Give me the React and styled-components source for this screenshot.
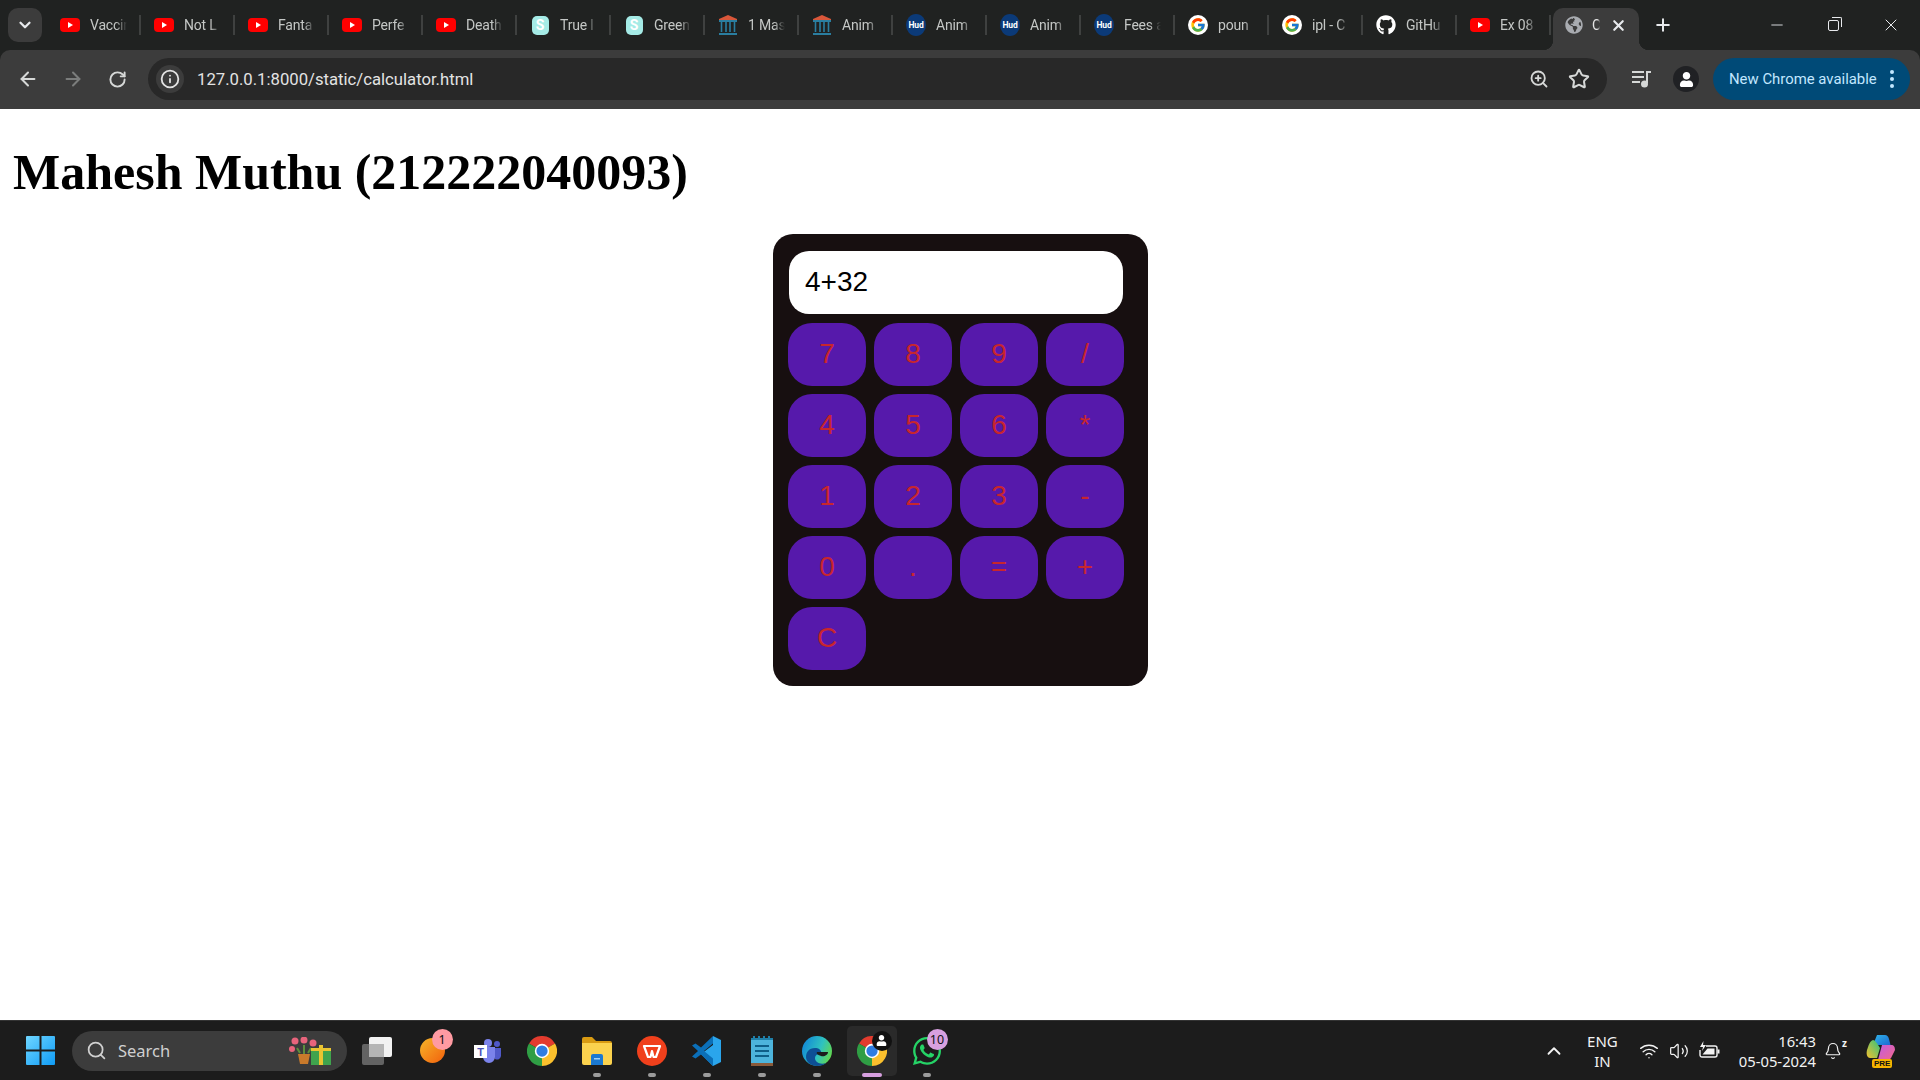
import * as React from "react";
import styled, { createGlobalStyle } from "styled-components";
import { ArrowLeft, ArrowRight, RotateCw, Info, ZoomIn, Star, ChevronDown, ChevronUp, X, Plus, Minus, Search, Wifi, Volume2, Bell } from "lucide-react";
import { FaGithub, FaWhatsapp, FaGlobeAmericas, FaUser } from "react-icons/fa";
import { FcGoogle } from "react-icons/fc";

const GlobalStyle = createGlobalStyle`
  html, body { margin: 0; padding: 0; }
  body { font-family: "Roboto", "Liberation Sans", sans-serif; background: #fff; }
`;

const Shell = styled.div`
  background: #202221;
  display: flex;
  flex-direction: column;
  height: 100vh;
  overflow: hidden;
`;

/* ---- tab strip ---- */
const TabStrip = styled.div`
  align-items: flex-end;
  display: flex;
  flex: 0 0 50px;
  padding-left: 8px;
`;

const TabSearch = styled.div`
  align-items: center;
  align-self: flex-start;
  background: #3c3c3c;
  border-radius: 10px;
  color: #e8eaed;
  display: flex;
  height: 34px;
  justify-content: center;
  margin: 8px 5px 0 0;
  width: 34px;
`;

const Tab = styled.div`
  align-items: center;
  align-self: stretch;
  display: flex;
  flex: 0 0 94px;
  padding-left: 13px;
  position: relative;
  box-sizing: border-box;
  &::after {
    background: #3f4140;
    content: "";
    height: 20px;
    position: absolute;
    right: 0;
    top: 15px;
    width: 2px;
  }
`;

const TabFav = styled.span`
  align-items: center;
  display: flex;
  flex: 0 0 20px;
  height: 20px;
  justify-content: center;
`;

const TabTitle = styled.span`
  color: #c4c7c5;
  font-size: 14px;
  letter-spacing: -0.2px;
  margin-left: 10px;
  overflow: hidden;
  white-space: nowrap;
  width: 37px;
  -webkit-mask-image: linear-gradient(to right, #000 70%, transparent);
  mask-image: linear-gradient(to right, #000 70%, transparent);
`;

const ActiveTab = styled.div`
  align-items: center;
  background: #3c3c3c;
  border-radius: 10px 10px 0 0;
  box-sizing: border-box;
  display: flex;
  flex: 0 0 86px;
  height: 42px;
  margin-left: 2px;
  padding: 0 11px 8px 11px;
  position: relative;
  &::before,
  &::after {
    bottom: 0;
    content: "";
    height: 10px;
    position: absolute;
    width: 10px;
  }
  &::before {
    background: radial-gradient(circle at 0 0, transparent 10px, #3c3c3c 10.5px);
    left: -10px;
  }
  &::after {
    background: radial-gradient(circle at 100% 0, transparent 10px, #3c3c3c 10.5px);
    right: -10px;
  }
`;

const ActiveTitle = styled(TabTitle)`
  color: #e3e3e3;
  margin-left: 8px;
  width: 8px;
  flex: 0 0 8px;
`;

const CloseTab = styled.span`
  color: #e8eaed;
  display: flex;
  margin-left: 10px;
`;

const NewTab = styled.span`
  align-items: center;
  align-self: center;
  color: #e8eaed;
  display: flex;
  margin: 0 0 0 14px;
`;

const WindowButtons = styled.div`
  align-self: flex-start;
  align-items: center;
  color: #e8eaed;
  display: flex;
  height: 50px;
  margin-left: auto;
  padding-right: 19px;
  gap: 42px;
`;

const RestoreIcon = styled.span`
  border: 1.5px solid #e8eaed;
  border-radius: 2px;
  box-sizing: border-box;
  display: block;
  height: 11px;
  position: relative;
  width: 11px;
  &::before {
    border-right: 1.5px solid #e8eaed;
    border-top: 1.5px solid #e8eaed;
    border-radius: 0 2px 0 0;
    content: "";
    height: 9px;
    position: absolute;
    right: -4px;
    top: -4px;
    width: 9px;
  }
`;

/* ---- toolbar ---- */
const Toolbar = styled.div`
  align-items: center;
  background: #3c3c3c;
  border-radius: 10px 10px 0 0;
  display: flex;
  flex: 0 0 59px;
  padding: 0 0 1px 16px;
  box-sizing: border-box;
`;

const NavButton = styled.span`
  align-items: center;
  color: ${(p) => (p.$dim ? "#7b7d7c" : "#d6d8d7")};
  display: flex;
  justify-content: center;
  margin-right: ${(p) => p.$gap || 0}px;
  width: 24px;
`;

const Omnibox = styled.div`
  align-items: center;
  background: #282828;
  border-radius: 21px;
  box-sizing: border-box;
  display: flex;
  height: 42px;
  margin-left: 19px;
  padding: 0 17px 0 4px;
  width: 1459px;
`;

const SiteInfo = styled.span`
  align-items: center;
  background: #3c3c3c;
  border-radius: 50%;
  color: #e3e3e3;
  display: flex;
  height: 28px;
  justify-content: center;
  margin-left: 4px;
  width: 28px;
`;

const Url = styled.span`
  color: #e3e3e3;
  font-size: 16.7px;
  margin-left: 13px;
`;

const OmniActions = styled.span`
  align-items: center;
  color: #d6d8d7;
  display: flex;
  gap: 19px;
  margin-left: auto;
`;

const ToolbarRight = styled.div`
  align-items: center;
  display: flex;
  flex: 1;
  padding-left: 25px;
`;

const MediaIcon = styled.span`
  color: #d6d8d7;
  display: flex;
`;

const Avatar = styled.span`
  align-items: center;
  background: #202124;
  border-radius: 50%;
  color: #fff;
  display: flex;
  height: 26px;
  justify-content: center;
  margin-left: 21px;
  overflow: hidden;
  width: 26px;
`;

const UpdatePill = styled.div`
  align-items: center;
  background: #004a77;
  border-radius: 21px;
  box-sizing: border-box;
  color: #c2e7ff;
  display: flex;
  font-size: 14.9px;
  height: 42px;
  margin-left: 14px;
  padding: 0 16px 0 16px;
  white-space: nowrap;
  width: 197px;
`;

const Dots = styled.span`
  display: flex;
  flex-direction: column;
  gap: 3px;
  margin-left: auto;
  i {
    background: #c2e7ff;
    border-radius: 50%;
    display: block;
    height: 4px;
    width: 4px;
  }
`;

/* ---- page ---- */
const Page = styled.main`
  background: #fff;
  box-sizing: border-box;
  flex: 1;
  padding: 0 13px;
`;

const Title = styled.h1`
  color: #000;
  font-family: "Liberation Serif", "Times New Roman", serif;
  font-size: 50px;
  font-weight: 700;
  line-height: 55px;
  margin: 36px 0 34px;
`;

const Calculator = styled.div`
  background: #170f10;
  border-radius: 20px;
  box-sizing: border-box;
  font-family: "Liberation Sans", Arial, sans-serif;
  height: 452px;
  margin: 0 auto;
  padding: 17px 15px 16px;
  position: relative;
  left: 0.5px;
  width: 375px;
`;

const Display = styled.div`
  align-items: center;
  background: #fff;
  border-radius: 20px;
  box-sizing: border-box;
  color: #000;
  display: flex;
  font-size: 28px;
  height: 63px;
  margin: 0 1px 9px;
  padding: 0 0 2px 16px;
  width: 334px;
`;

const Keys = styled.div`
  display: grid;
  gap: 8px;
  grid-auto-rows: 63px;
  grid-template-columns: repeat(4, 78px);
`;

const Key = styled.button`
  background: #5619ab;
  border: 0;
  border-radius: 24px;
  color: #c8262d;
  font-family: inherit;
  font-size: 28px;
  padding: 0 0 2px;
`;

/* ---- taskbar ---- */
const Taskbar = styled.footer`
  align-items: center;
  background: #1c1c1c;
  border-top: 1px solid #333;
  box-sizing: border-box;
  display: flex;
  flex: 0 0 60px;
  padding-left: 13px;
`;

const TaskItem = styled.div`
  align-items: center;
  display: flex;
  flex: 0 0 55px;
  height: 50px;
  justify-content: center;
  position: relative;
  ${(p) =>
    p.$active &&
    `
    &::before {
      background: #2a2a2a;
      border-radius: 5px;
      content: "";
      inset: 0 2.5px;
      position: absolute;
    }
  `}
  & > svg { position: relative; }
`;

const RunDot = styled.span`
  background: ${(p) => (p.$active ? "#d7a0e0" : "#9b9b9b")};
  border-radius: 2px;
  bottom: -1px;
  height: 4px;
  left: 50%;
  position: absolute;
  transform: translateX(-50%);
  width: ${(p) => (p.$active ? 20 : 8)}px;
`;

const Badge = styled.span`
  align-items: center;
  background: ${(p) => p.$bg};
  border-radius: 50%;
  color: #111;
  display: flex;
  font-family: "Noto Sans", sans-serif;
  font-size: 12.5px;
  height: 21px;
  justify-content: center;
  position: absolute;
  right: 7px;
  top: 3px;
  width: 21px;
`;

const ProfileMark = styled.span`
  align-items: center;
  background: #111;
  border-radius: 50%;
  color: #fff;
  display: flex;
  height: 20px;
  justify-content: center;
  position: absolute;
  right: 8px;
  top: 5px;
  width: 20px;
`;

const SearchBox = styled.div`
  align-items: center;
  background: #3c3c3c;
  border-radius: 20px;
  box-sizing: border-box;
  color: #d0d0d0;
  display: flex;
  flex: 0 0 275px;
  font-family: "Noto Sans", sans-serif;
  font-size: 16.5px;
  height: 40px;
  margin: 0 2.5px 0 4px;
  padding: 0 14px 0 14px;
`;

const SearchLabel = styled.span`
  margin-left: 11px;
`;

const SearchArt = styled.span`
  display: flex;
  margin-left: auto;
`;

const Tray = styled.div`
  align-items: center;
  color: #f2f2f2;
  display: flex;
  font-family: "Noto Sans", sans-serif;
  margin-left: auto;
  padding-right: 23px;
`;

const Lang = styled.div`
  font-size: 15px;
  line-height: 20px;
  margin: 0 21px 0 22px;
  text-align: center;
`;

const TrayIcons = styled.div`
  align-items: center;
  display: flex;
  gap: 10px;
`;

const Clock = styled.div`
  font-size: 14.8px;
  line-height: 20px;
  margin-left: 19px;
  text-align: right;
`;

const BellWrap = styled.span`
  display: flex;
  margin-left: 8px;
  position: relative;
`;

const Snooze = styled.span`
  background: #1c1c1c;
  font-size: 10px;
  font-weight: 700;
  line-height: 1;
  position: absolute;
  right: -5px;
  top: -4px;
`;

const CopilotWrap = styled.span`
  display: flex;
  height: 32px;
  margin-left: 23px;
  position: relative;
  width: 32px;
`;

const PreTag = styled.span`
  background: #f6b400;
  border-radius: 2px;
  bottom: -1px;
  color: #111;
  font-family: "Liberation Sans", sans-serif;
  font-size: 8px;
  font-weight: 700;
  left: 7px;
  line-height: 9px;
  padding: 0 2px;
  position: absolute;
`;

/* ---- drawn icons ---- */
const YouTube = () => (
  <svg width="20" height="14" viewBox="0 0 20 14">
    <rect width="20" height="14" rx="4" fill="#f00" />
    <path d="M8 4l5 3-5 3z" fill="#fff" />
  </svg>
);

const Scribe = styled.span`
  align-items: center;
  background: #a5ebe6;
  border-radius: 5px;
  color: #fff;
  display: flex;
  font-size: 14px;
  font-weight: 700;
  height: 19px;
  justify-content: center;
  width: 17px;
`;

const Bank = () => (
  <svg width="20" height="22" viewBox="0 0 20 22">
    <path d="M1 5l9-4 9 4v1H1z" fill="#d9573a" />
    <path d="M3.5 7v11M8 7v11M12 7v11M16.5 7v11" stroke="#2a7ea0" strokeWidth="1.6" />
    <path d="M1 7h18M1 20h18" stroke="#2a7ea0" strokeWidth="1.8" />
  </svg>
);

const Hud = styled.span`
  align-items: center;
  background: #0b3a78;
  border-radius: 50%;
  color: #fff;
  display: flex;
  font-size: 8.5px;
  font-weight: 700;
  height: 22px;
  justify-content: center;
  letter-spacing: -0.2px;
  width: 20px;
`;

const GoogleFav = styled.span`
  align-items: center;
  background: #fff;
  border-radius: 50%;
  display: flex;
  height: 20px;
  justify-content: center;
  width: 20px;
`;

const favicons = {
  yt: <YouTube />,
  s: <Scribe>S</Scribe>,
  bank: <Bank />,
  hud: <Hud>Hud</Hud>,
  g: (
    <GoogleFav>
      <FcGoogle size={16} />
    </GoogleFav>
  ),
  gh: <FaGithub size={20} color="#fff" />,
};

const tabs = [
  ["yt", "Vaccin"],
  ["yt", "Not L"],
  ["yt", "Fanta"],
  ["yt", "Perfe"],
  ["yt", "Death"],
  ["s", "True l"],
  ["s", "Green"],
  ["bank", "1 Mas"],
  ["bank", "Anim"],
  ["hud", "Anim"],
  ["hud", "Anim"],
  ["hud", "Fees a"],
  ["g", "poun"],
  ["g", "ipl - C"],
  ["gh", "GitHu"],
  ["yt", "Ex 08"],
];

const keys = ["7", "8", "9", "/", "4", "5", "6", "*", "1", "2", "3", "-", "0", ".", "=", "+", "C"];

const WinLogo = () => (
  <svg width="29" height="29" viewBox="0 0 29 29">
    <defs>
      <linearGradient id="win" x1="0" y1="0" x2="1" y2="1">
        <stop offset="0" stopColor="#6fd6ff" />
        <stop offset="1" stopColor="#0f9bf5" />
      </linearGradient>
    </defs>
    <path d="M1 0h12.5v13.5H0V1a1 1 0 0 1 1-1zM15.5 0H28a1 1 0 0 1 1 1v12.5H15.5zM0 15.5h13.5V29H1a1 1 0 0 1-1-1zM15.5 15.5H29V28a1 1 0 0 1-1 1H15.5z" fill="url(#win)" />
  </svg>
);

const TaskView = () => (
  <svg width="30" height="28" viewBox="0 0 30 28">
    <rect x="7" y="0" width="23" height="20" rx="2" fill="#f2f2f2" />
    <rect x="0" y="7" width="22" height="21" rx="2" fill="#6b6b6b" fillOpacity="0.9" />
    <rect x="7" y="7" width="15" height="13" fill="#b5b5b5" />
  </svg>
);

const Chrome = ({ size = 30 }) => (
  <svg width={size} height={size} viewBox="0 0 48 48">
    <path d="M24 24L3.2 12A24 24 0 0 1 44.8 12z" fill="#e33b2e" />
    <path d="M24 24L44.8 12A24 24 0 0 1 24 48z" fill="#fbc02d" />
    <path d="M24 24L24 48A24 24 0 0 1 3.2 12z" fill="#2f9e44" />
    <circle cx="24" cy="24" r="11.5" fill="#fff" />
    <circle cx="24" cy="24" r="9" fill="#2f7de1" />
  </svg>
);

const Folder = () => (
  <svg width="30" height="28" viewBox="0 0 30 28">
    <path d="M0 2a2 2 0 0 1 2-2h8l4 4h14a2 2 0 0 1 2 2v4H0z" fill="#d99b12" />
    <path d="M0 6h30v20a2 2 0 0 1-2 2H2a2 2 0 0 1-2-2z" fill="#fbd24e" />
    <path d="M9 19a2 2 0 0 1 2-2h8a2 2 0 0 1 2 2v9H9z" fill="#1b78d0" />
    <rect x="12" y="21" width="6" height="1.5" fill="#9fd0f7" />
  </svg>
);

const Wps = () => (
  <svg width="30" height="30" viewBox="0 0 30 30">
    <circle cx="15" cy="15" r="15" fill="#f0401c" />
    <path d="M7 10h16l-4 11h-2.5L15 15l-1.5 6H11z" fill="none" stroke="#fff" strokeWidth="2.2" strokeLinejoin="round" />
  </svg>
);

const VsCode = () => (
  <svg width="30" height="30" viewBox="0 0 30 30">
    <path d="M21 0l8 4v22l-8 4-12-12 12-9z" fill="#2aa5ec" />
    <path d="M21 0L9 11.5 3.5 7.5 0 9.5 6 15l-6 5.5 3.5 2L9 18.5 21 30v-7.5L12 15l9-7.5z" fill="#0b6fb8" />
  </svg>
);

const Notepad = () => (
  <svg width="22" height="30" viewBox="0 0 22 30">
    <rect y="2" width="22" height="28" rx="1" fill="#4db4dc" />
    <rect y="27" width="22" height="3" fill="#8a5a3a" />
    <rect y="2" width="22" height="2" fill="#1f7fa8" />
    <path d="M3 0v4M8 0v4M13 0v4M18 0v4" stroke="#1f7fa8" strokeWidth="2" />
    <path d="M4 10h14M4 15h14M4 20h14" stroke="#0f5f88" strokeWidth="1.8" />
  </svg>
);

const Edge = () => (
  <svg width="30" height="30" viewBox="0 0 30 30">
    <defs>
      <linearGradient id="edge" x1="0" y1="0.2" x2="1" y2="0.6">
        <stop offset="0" stopColor="#1085d8" />
        <stop offset="0.6" stopColor="#2fc2c0" />
        <stop offset="1" stopColor="#62d84f" />
      </linearGradient>
    </defs>
    <circle cx="15" cy="15" r="15" fill="url(#edge)" />
    <path d="M13 12c-6 0-9 4-9 9 0 5 5 9 11 9 4 0 7-1 9-3-6 2-11-1-11-5 0-2 1-3 3-4 4 0 4-3 1-5-1-1-2-1-4-1z" fill="#0d4f96" />
    <path d="M15 16c4 0 8 0 11 0 0 3-4 5-7 4-3-1-5-2-4-4z" fill="#1c1c1c" />
  </svg>
);

const Teams = () => (
  <svg width="27" height="24" viewBox="0 0 27 24">
    <circle cx="14" cy="4" r="4" fill="#7b83eb" />
    <circle cx="23" cy="5" r="3" fill="#5059c9" />
    <path d="M18 9h9v8a4 4 0 0 1-6 3z" fill="#5059c9" />
    <path d="M7 8h14v10a6 6 0 0 1-12 0z" fill="#7b83eb" />
    <rect x="0" y="6" width="13" height="13" fill="#fff" />
    <text x="6.5" y="16.5" textAnchor="middle" fontSize="11" fontWeight="700" fontFamily="Liberation Sans" fill="#4b53bc">T</text>
  </svg>
);

const Orange = () => (
  <svg width="25" height="25" viewBox="0 0 25 25">
    <defs>
      <linearGradient id="orange" x1="0" y1="0" x2="1" y2="1">
        <stop offset="0" stopColor="#f6b62a" />
        <stop offset="1" stopColor="#f2600c" />
      </linearGradient>
    </defs>
    <circle cx="12.5" cy="12.5" r="12.5" fill="url(#orange)" />
  </svg>
);

const FlowerGift = () => (
  <svg width="44" height="28" viewBox="0 0 44 28">
    <path d="M9 17h12l-2 10h-8z" fill="#c97a2b" />
    <path d="M15 17V8M11 16l-3-5M19 16l3-5" stroke="#5c8f3c" strokeWidth="2" />
    <circle cx="6" cy="4" r="3.5" fill="#e8647c" />
    <circle cx="15" cy="3" r="3.5" fill="#e8647c" />
    <circle cx="24" cy="6" r="3.5" fill="#e8647c" />
    <circle cx="3" cy="12" r="3" fill="#e8647c" />
    <rect x="22" y="11" width="20" height="17" fill="#3fa34d" />
    <rect x="22" y="11" width="20" height="3" fill="#e9c431" />
    <rect x="30" y="8" width="4" height="20" fill="#e9c431" />
  </svg>
);

const Copilot = () => (
  <svg width="30" height="26" viewBox="0 0 30 26">
    <defs>
      <linearGradient id="cop1" x1="0" y1="0" x2="1" y2="1">
        <stop offset="0" stopColor="#2fb6e8" />
        <stop offset="1" stopColor="#1a5fd0" />
      </linearGradient>
      <linearGradient id="cop2" x1="0" y1="1" x2="1" y2="0">
        <stop offset="0" stopColor="#f2c12e" />
        <stop offset="1" stopColor="#2ec27e" />
      </linearGradient>
      <linearGradient id="cop3" x1="0" y1="0" x2="1" y2="1">
        <stop offset="0" stopColor="#c25ce0" />
        <stop offset="1" stopColor="#f4688a" />
      </linearGradient>
    </defs>
    <path d="M12 0h8c2 0 3 1 4 4l2 8-8-2H8z" fill="url(#cop1)" />
    <path d="M8 5c-3 1-4 4-6 10-1 4 0 8 3 8h7l3-10c-3-5-5-8-7-8z" fill="url(#cop2)" />
    <path d="M17 10h9c3 0 4 2 4 5l-3 6c-1 3-3 4-6 4h-8z" fill="url(#cop3)" />
  </svg>
);

const BatteryBolt = () => (
  <svg width="21" height="19" viewBox="0 0 21 19" fill="none" stroke="#f2f2f2" strokeWidth="1.4">
    <path d="M7 5h9a2 2 0 0 1 2 2v7a2 2 0 0 1-2 2H3a2 2 0 0 1-2-2V9" strokeLinejoin="round" />
    <path d="M3.5 13.5h12V7.5H8.5z" fill="#f2f2f2" stroke="none" />
    <path d="M4.5 0L1 6h3L3 10l4-6H4z" fill="#f2f2f2" stroke="none" />
    <path d="M19.5 8.5v4" strokeWidth="2" />
  </svg>
);

const App = () => (
  <Shell>
    <GlobalStyle />
    <TabStrip>
      <TabSearch>
        <ChevronDown size={18} strokeWidth={3} />
      </TabSearch>
      {tabs.map(([icon, title], i) => (
        <Tab key={i}>
          <TabFav>{favicons[icon]}</TabFav>
          <TabTitle>{title}</TabTitle>
        </Tab>
      ))}
      <ActiveTab>
        <TabFav>
          <FaGlobeAmericas size={18} color="#a8abb0" />
        </TabFav>
        <ActiveTitle>C</ActiveTitle>
        <CloseTab>
          <X size={17} strokeWidth={3} />
        </CloseTab>
      </ActiveTab>
      <NewTab>
        <Plus size={20} strokeWidth={2.4} />
      </NewTab>
      <WindowButtons>
        <Minus size={18} strokeWidth={1.2} />
        <RestoreIcon />
        <X size={20} strokeWidth={1.2} />
      </WindowButtons>
    </TabStrip>

    <Toolbar>
      <NavButton $gap={21}>
        <ArrowLeft size={22} strokeWidth={2.2} />
      </NavButton>
      <NavButton $dim $gap={20}>
        <ArrowRight size={22} strokeWidth={2.2} />
      </NavButton>
      <NavButton>
        <RotateCw size={19} strokeWidth={2.4} />
      </NavButton>
      <Omnibox>
        <SiteInfo>
          <Info size={20} strokeWidth={2.2} />
        </SiteInfo>
        <Url>127.0.0.1:8000/static/calculator.html</Url>
        <OmniActions>
          <ZoomIn size={20} strokeWidth={2.2} />
          <Star size={22} strokeWidth={2.2} />
        </OmniActions>
      </Omnibox>
      <ToolbarRight>
        <MediaIcon>
          <svg width="20" height="20" viewBox="0 0 20 20" fill="currentColor">
            <rect x="0" y="2" width="12" height="2" />
            <rect x="0" y="7" width="12" height="2" />
            <rect x="0" y="12" width="8" height="2" />
            <rect x="14" y="2" width="2" height="12" />
            <rect x="14" y="2" width="5" height="2" />
            <circle cx="12.5" cy="15" r="3.5" />
          </svg>
        </MediaIcon>
        <Avatar>
          <FaUser size={15} />
        </Avatar>
        <UpdatePill>
          New Chrome available
          <Dots>
            <i />
            <i />
            <i />
          </Dots>
        </UpdatePill>
      </ToolbarRight>
    </Toolbar>

    <Page>
      <Title>Mahesh Muthu (212222040093)</Title>
      <Calculator>
        <Display>4+32</Display>
        <Keys>
          {keys.map((k) => (
            <Key key={k}>{k}</Key>
          ))}
        </Keys>
      </Calculator>
    </Page>

    <Taskbar>
      <TaskItem>
        <WinLogo />
      </TaskItem>
      <SearchBox>
        <Search size={21} strokeWidth={2} />
        <SearchLabel>Search</SearchLabel>
        <SearchArt>
          <FlowerGift />
        </SearchArt>
      </SearchBox>
      <TaskItem>
        <TaskView />
      </TaskItem>
      <TaskItem>
        <Orange />
        <Badge $bg="#ff9aa2">1</Badge>
      </TaskItem>
      <TaskItem>
        <Teams />
      </TaskItem>
      <TaskItem>
        <Chrome />
      </TaskItem>
      <TaskItem>
        <Folder />
        <RunDot />
      </TaskItem>
      <TaskItem>
        <Wps />
        <RunDot />
      </TaskItem>
      <TaskItem>
        <VsCode />
        <RunDot />
      </TaskItem>
      <TaskItem>
        <Notepad />
        <RunDot />
      </TaskItem>
      <TaskItem>
        <Edge />
        <RunDot />
      </TaskItem>
      <TaskItem $active>
        <Chrome />
        <ProfileMark>
          <FaUser size={11} />
        </ProfileMark>
        <RunDot $active />
      </TaskItem>
      <TaskItem>
        <FaWhatsapp size={32} color="#25d366" />
        <Badge $bg="#d7a0e0">10</Badge>
        <RunDot />
      </TaskItem>
      <Tray>
        <ChevronUp size={22} strokeWidth={2} />
        <Lang>
          ENG
          <br />
          IN
        </Lang>
        <TrayIcons>
          <Wifi size={20} strokeWidth={1.7} />
          <Volume2 size={20} strokeWidth={1.5} />
          <BatteryBolt />
        </TrayIcons>
        <Clock>
          16:43
          <br />
          05-05-2024
        </Clock>
        <BellWrap>
          <Bell size={18} strokeWidth={1.6} />
          <Snooze>z</Snooze>
        </BellWrap>
        <CopilotWrap>
          <Copilot />
          <PreTag>PRE</PreTag>
        </CopilotWrap>
      </Tray>
    </Taskbar>
  </Shell>
);

export default App;
